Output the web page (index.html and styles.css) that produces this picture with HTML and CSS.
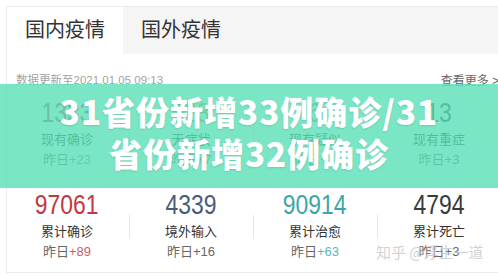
FILE: index.html
```html
<!DOCTYPE html>
<html lang="zh-CN">
<head>
  <meta charset="UTF-8">
  <meta name="viewport" content="width=device-width, initial-scale=1.0">
  <title>31省份新增33例确诊</title>
  <link rel="stylesheet" href="styles.css">
</head>
<body>
  <div class="card">
    <!-- Tabs -->
    <div class="tabs">
      <div class="tab active">国内疫情</div>
      <div class="tab">国外疫情</div>
    </div>

    <div class="update-row">
      <span class="update-time">数据更新至2021.01.05 09:13</span>
      <a class="more" href="#">查看更多 &gt;</a>
    </div>

    <!-- Stats -->
    <div class="stats">
      <div class="stat">
        <div class="num red"><span>1333</span></div>
        <div class="label">现有确诊</div>
        <div class="delta">昨日<em class="red-light">+23</em></div>
      </div>
      <div class="stat">
        <div class="num orange"><span>523</span></div>
        <div class="label">无症状</div>
        <div class="delta">昨日<em>+7</em></div>
      </div>
      <div class="stat">
        <div class="num amber"><span>6</span></div>
        <div class="label">现有疑似</div>
        <div class="delta">昨日<em>+1</em></div>
      </div>
      <div class="stat">
        <div class="num dark"><span>13</span></div>
        <div class="label">现有重症</div>
        <div class="delta">昨日<em>+3</em></div>
      </div>

      <div class="stat">
        <div class="num red"><span>97061</span></div>
        <div class="label">累计确诊</div>
        <div class="delta">昨日<em class="red-light">+89</em></div>
      </div>
      <div class="stat">
        <div class="num blue"><span>4339</span></div>
        <div class="label">境外输入</div>
        <div class="delta">昨日<em>+16</em></div>
      </div>
      <div class="stat">
        <div class="num teal"><span>90914</span></div>
        <div class="label">累计治愈</div>
        <div class="delta">昨日<em class="teal-light">+63</em></div>
      </div>
      <div class="stat">
        <div class="num dark"><span>4794</span></div>
        <div class="label">累计死亡</div>
        <div class="delta">昨日<em>+3</em></div>
      </div>
    </div>
  </div>

  <!-- Headline banner over the card -->
  <div class="banner">
    <h1>31省份新增33例确诊/31<br>省份新增32例确诊</h1>
  </div>

  <div class="watermark">知乎 @浮生一道</div>
</body>
</html>
```

FILE: styles.css
```css
/* General */
body {
  margin: 0;
  width: 498px;
  height: 275px;
  overflow: hidden;
  position: relative;
  background: #fff;
  font-family: "Liberation Sans", "Noto Sans CJK SC", sans-serif;
  color: #333;
}

.card {
  margin: 6px 0 0 6px;
  width: 500px;
  border: 1px solid #ebebeb;
  border-right: none;
  padding-bottom: 10px;
}

/* Tabs */
.tabs {
  display: flex;
  height: 47px;
  background: #f5f5f5;
}

.tab {
  width: 116px;
  font-size: 20px;
  line-height: 47px;
  text-align: center;
  color: #333;
}

.tab.active {
  background: #fff;
}

.update-row {
  display: flex;
  justify-content: space-between;
  align-items: center;
  height: 18px;
  margin-top: 16px;
  padding: 0 8px 0 9px;
}

.update-time {
  font-size: 11.5px;
  color: #a3a3a3;
}

.more {
  font-size: 12px;
  color: #666;
  text-decoration: none;
}

/* Stats grid */
.stats {
  display: grid;
  grid-template-columns: repeat(4, 124px);
  row-gap: 18px;
  margin: 8px 0 0 -2px;
}

.stat {
  height: 74px;
  text-align: center;
}

.stat:not(:nth-child(4n + 1)) {
  background: linear-gradient(#e6e6e6, #e6e6e6) left 27px / 1px 24px no-repeat;
}

.num {
  font-size: 27px;
  line-height: 34px;
}

.num span {
  display: inline-block;
  transform: scaleX(0.85);
}

.label {
  font-size: 13px;
  line-height: 20px;
  color: #333;
}

.delta {
  font-size: 13px;
  line-height: 20px;
  color: #666;
}

.delta em {
  font-style: normal;
}

.red { color: #c1393f; }
.orange { color: #e8803c; }
.amber { color: #b8862b; }
.blue { color: #4b5b7b; }
.teal { color: #3ba6a9; }
.dark { color: #3a3a3a; }
.red-light { color: #c7606a; }
.teal-light { color: #55b8bc; }

/* Banner overlay */
.banner {
  position: absolute;
  left: 0;
  top: 84px;
  width: 100%;
  height: 104px;
  box-sizing: border-box;
  padding-top: 6px;
  background: rgba(90, 224, 182, 0.8);
}

.banner h1 {
  margin: 0;
  font-family: "Noto Sans CJK SC", sans-serif;
  font-size: 33px;
  font-weight: 900;
  line-height: 42px;
  letter-spacing: 1px;
  text-align: center;
  color: #fff;
  text-shadow: 0 1px 2px rgba(0, 0, 0, 0.12);
}

.watermark {
  position: absolute;
  left: 376px;
  top: 243px;
  font-family: "Noto Sans CJK SC", sans-serif;
  font-size: 15px;
  line-height: 18px;
  color: rgba(170, 170, 170, 0.55);
  text-shadow: 0 0 1px rgba(255, 255, 255, 0.8);
}
```
